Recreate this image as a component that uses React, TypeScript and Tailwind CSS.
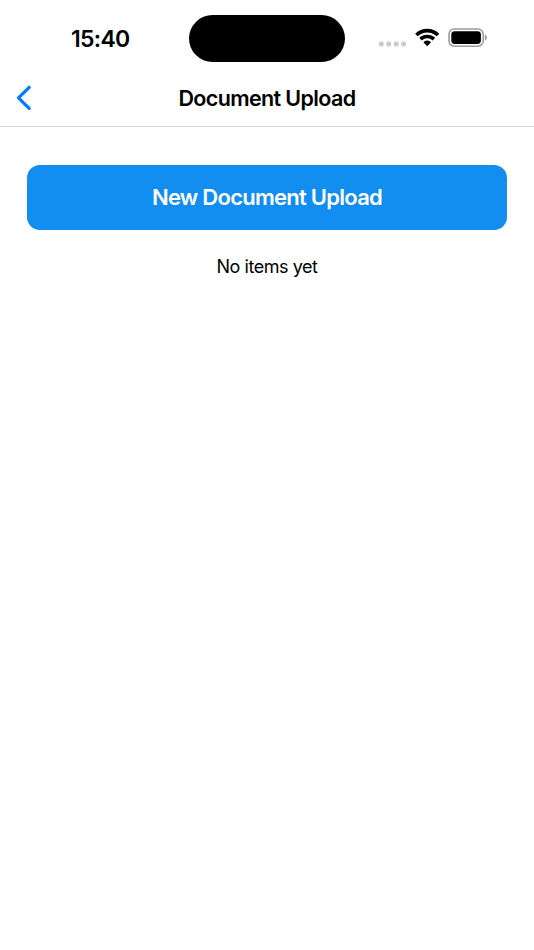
import React from "react";

const StatusIcons: React.FC = () => (
  <svg width="110" height="24" viewBox="378 26 110 24" fill="none">
    <g fill="#cbcbcd">
      <rect x="378.8" y="41.5" width="5" height="5" rx="1.9" />
      <rect x="386.2" y="41.5" width="5" height="5" rx="1.9" />
      <rect x="393.7" y="41.5" width="5" height="5" rx="1.9" />
      <rect x="401.1" y="41.5" width="5" height="5" rx="1.9" />
    </g>
    <g stroke="#000" strokeWidth="3.7">
      <path d="M416.4 35a15.6 15.6 0 0 1 21.6 0" />
      <path d="M420.5 39.2a9.7 9.7 0 0 1 13.4 0" />
    </g>
    <path
      d="M424.2 42.3a5 5 0 0 1 6 0l-3 3.1z"
      fill="#000"
      stroke="#000"
      strokeWidth="1.2"
      strokeLinejoin="round"
    />
    <rect x="449" y="29" width="34.2" height="17.2" rx="5.3" stroke="#9c9c9c" strokeWidth="1.6" />
    <rect x="451.3" y="31.2" width="29.6" height="12.8" rx="3.4" fill="#000" />
    <path d="M484.9 34.6c2.7 1 2.7 5 0 6z" fill="#9c9c9c" />
  </svg>
);

const StatusBar: React.FC = () => (
  <div className="flex h-[70px] items-start">
    <div className="w-[189px] pt-[25px] pl-[71px] text-[23px] leading-[28px] font-semibold tracking-[-0.7px]">
      15:40
    </div>
    <div className="mt-[15px] h-[47px] w-[156px] rounded-full bg-black" />
    <div className="pt-[26px] pl-[33px]">
      <StatusIcons />
    </div>
  </div>
);

const Header: React.FC = () => (
  <header className="grid h-[57px] grid-cols-[60px_1fr_60px] items-center border-b border-[#d2d2d2]">
    <button aria-label="Back" className="pl-[15px]">
      <svg width="18" height="26" viewBox="0 0 18 26" fill="none">
        <path
          d="M14.2 2.3 3.5 12.8l10.7 10.5"
          stroke="#007aff"
          strokeWidth="3.2"
          strokeLinecap="round"
          strokeLinejoin="round"
        />
      </svg>
    </button>
    <h1 className="text-center text-[21.5px] font-semibold tracking-[-0.62px]">
      Document Upload
    </h1>
  </header>
);

const App: React.FC = () => {
  return (
    <div className="min-h-screen bg-white font-[Inter,sans-serif] text-black">
      <StatusBar />
      <Header />
      <main className="flex flex-col px-[27px] pt-[38px]">
        <button className="h-[64.5px] rounded-[13px] bg-[#118ef0] text-[22px] font-semibold tracking-[-0.74px] text-white">
          New Document Upload
        </button>
        <p className="mt-[25.5px] text-center text-[18px] leading-6 tracking-[-0.45px]">
          No items yet
        </p>
      </main>
    </div>
  );
};

export default App;
